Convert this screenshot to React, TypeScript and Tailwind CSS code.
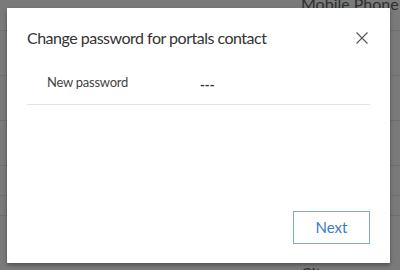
import React from "react";

export default function App() {
  const font = { fontFamily: 'Lato, "Open Sans", sans-serif' };
  return (
    <div className="relative w-[400px] h-[270px] overflow-hidden bg-[#7a7a7a]" style={font}>
      {/* background page (dimmed) */}
      <div className="flex flex-col">
        <div className="h-[31px] border-b border-[#6e6e6e] relative">
          <span className="absolute left-[301px] top-[-8px] text-[16px] text-[#2e2e2e]">Mobile Phone</span>
        </div>
        <div className="h-[45px] border-b border-[#6e6e6e]" />
        <div className="h-[45px] border-b border-[#6e6e6e]" />
        <div className="h-[45px] border-b border-[#6e6e6e]" />
        <div className="h-[30px] border-b border-[#6e6e6e]" />
        <div className="h-[20px] border-b border-[#6e6e6e]" />
        <div className="h-[50px] relative">
          <span className="absolute left-[301px] top-[45px] text-[16px] text-[#2e2e2e]">City</span>
        </div>
      </div>

      {/* dialog */}
      <div className="absolute left-[7px] top-[8px] w-[383px] h-[255px] bg-white shadow-[0_2px_4px_rgba(0,0,0,0.35)] flex flex-col px-[20px]">
        <div className="flex items-center justify-between pt-[18px]">
          <span className="text-[16px] leading-[24px] tracking-[-0.5px] text-[#333]">Change password for portals contact</span>
          <svg width="14" height="14" viewBox="0 0 14 14" className="mr-[1px]">
            <path d="M1.5 1.5 L12.5 12.5 M12.5 1.5 L1.5 12.5" stroke="#555" strokeWidth="1.1" />
          </svg>
        </div>
        <div className="flex items-start mt-[24px] pb-[11px] border-b border-[#e3e3e3]">
          <span className="ml-[20px] w-[153px] text-[13px] leading-[16px] tracking-[-0.25px] text-[#444]">New password</span>
          <span className="text-[13px] leading-[16px] font-bold text-[#333] mt-[3px]">---</span>
        </div>
        <div className="flex-1" />
        <div className="flex justify-end pb-[19px]">
          <button className="w-[77px] h-[33px] border border-[#7fa9dc] text-[#3b7bc7] text-[15px]">Next</button>
        </div>
      </div>
    </div>
  );
}
